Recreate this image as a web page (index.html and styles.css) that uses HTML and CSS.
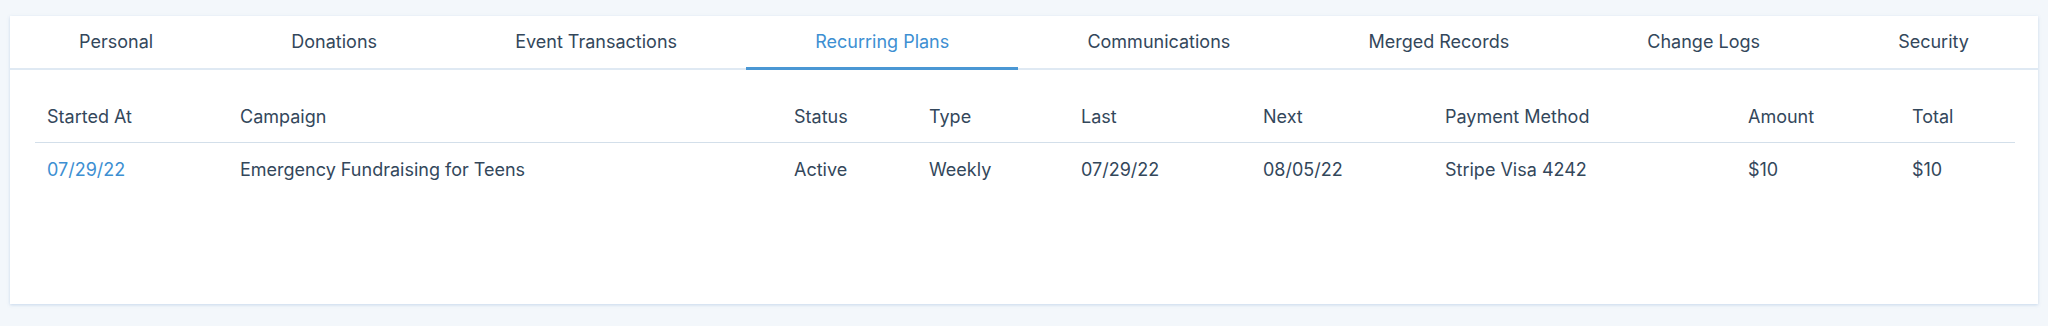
FILE: index.html
```html
<!DOCTYPE html>
<html>
<head>
<meta charset="utf-8">
<link rel="stylesheet" href="styles.css">
</head>
<body>
<div class="card">
  <nav class="tabs">
    <div class="tab">Personal</div>
    <div class="tab">Donations</div>
    <div class="tab">Event Transactions</div>
    <div class="tab active">Recurring Plans</div>
    <div class="tab">Communications</div>
    <div class="tab">Merged Records</div>
    <div class="tab">Change Logs</div>
    <div class="tab">Security</div>
  </nav>
  <div class="content">
    <table class="plans">
      <colgroup>
        <col class="c1"><col class="c2"><col class="c3"><col class="c4"><col class="c5"><col class="c6"><col class="c7"><col class="c8"><col class="c9">
      </colgroup>
      <thead>
        <tr><th>Started At</th><th>Campaign</th><th>Status</th><th>Type</th><th>Last</th><th>Next</th><th>Payment Method</th><th>Amount</th><th>Total</th></tr>
      </thead>
      <tbody>
        <tr><td><a class="link" href="#">07/29/22</a></td><td>Emergency Fundraising for Teens</td><td>Active</td><td>Weekly</td><td>07/29/22</td><td>08/05/22</td><td>Stripe Visa 4242</td><td>$10</td><td>$10</td></tr>
      </tbody>
    </table>
  </div>
</div>
</body>
</html>
```
FILE: styles.css
```css
html, body { margin: 0; padding: 0; }
body {
  background: #f3f7fb;
  font-family: Inter, Lato, "Noto Sans", sans-serif;
  color: #33475b;
  padding: 16px 10px 22px 10px;
  height: 326px;
  box-sizing: border-box;
}
.card {
  background: #fff;
  height: 288px;
  box-shadow: 0 1px 3px rgba(120, 160, 210, 0.35);
}
.tabs {
  display: flex;
  height: 54px;
  border-bottom: 2px solid #dfe9f3;
  box-sizing: border-box;
}
.tab {
  flex: 1 1 auto;
  text-align: center;
  font-size: 18px;
  line-height: 51px;
  border-bottom: 3px solid transparent;
  margin-bottom: -2px;
}
.tab.active { color: #3d8fd2; border-bottom-color: #4a97d4; }
.content { padding: 20px 23px 0 25px; }
.plans { border-collapse: collapse; table-layout: fixed; width: 1980px; font-size: 18px; }
.c1 { width: 193px; } .c2 { width: 554px; } .c3 { width: 135px; } .c4 { width: 152px; }
.c5 { width: 182px; } .c6 { width: 182px; } .c7 { width: 303px; } .c8 { width: 164px; } .c9 { width: 115px; }
.plans th, .plans td { text-align: left; font-weight: normal; padding: 0 0 0 12px; height: 52px; white-space: nowrap; }
.plans thead th { border-bottom: 1px solid #d3dfea; }
.link { color: #3d8fd2; text-decoration: none; }
```
